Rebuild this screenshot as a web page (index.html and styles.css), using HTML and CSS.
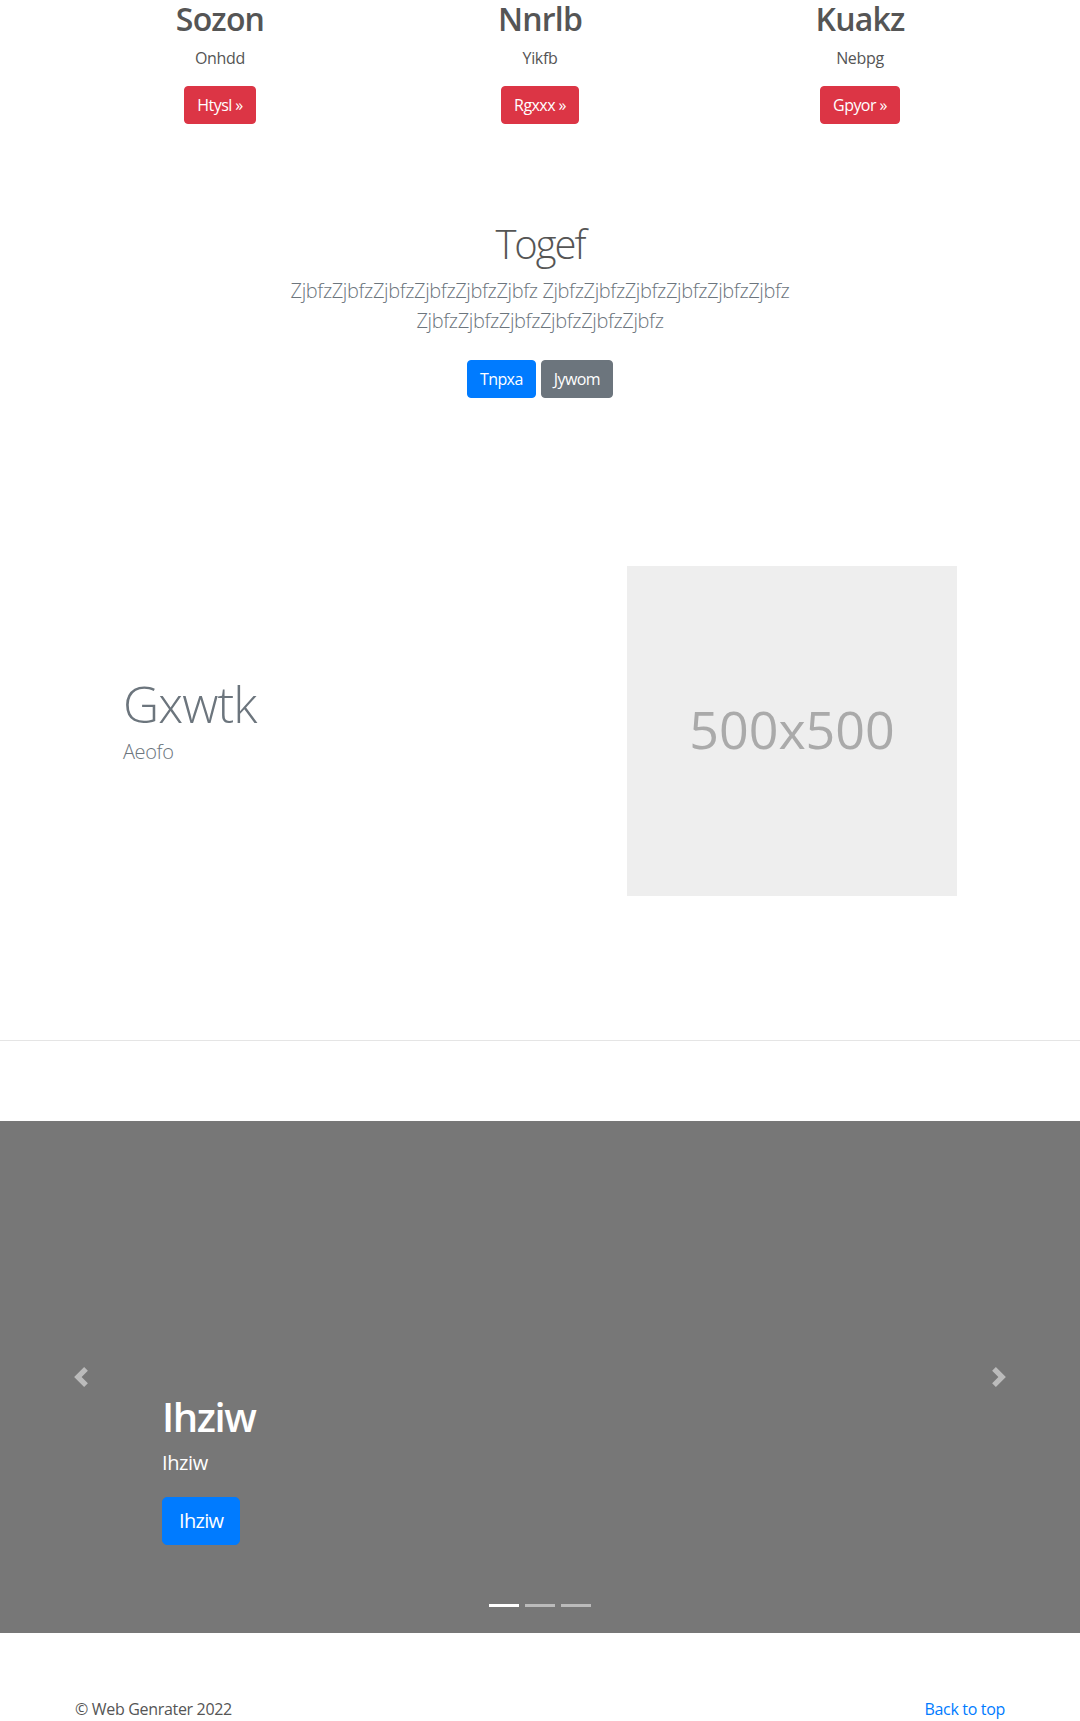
FILE: index.html
```html
<!DOCTYPE html>
<html lang="en">
<head>
<meta charset="utf-8">
<title>Web Genrater</title>
<link rel="stylesheet" href="styles.css">
</head>
<body>
<main>
  <section class="marketing">
    <div class="marketing-col">
      <h2 class="marketing-title">Sozon</h2>
      <p class="marketing-text">Onhdd</p>
      <p class="marketing-action"><a class="btn btn-danger" href="#">Htysl &raquo;</a></p>
    </div>
    <div class="marketing-col">
      <h2 class="marketing-title">Nnrlb</h2>
      <p class="marketing-text">Yikfb</p>
      <p class="marketing-action"><a class="btn btn-danger" href="#">Rgxxx &raquo;</a></p>
    </div>
    <div class="marketing-col">
      <h2 class="marketing-title">Kuakz</h2>
      <p class="marketing-text">Nebpg</p>
      <p class="marketing-action"><a class="btn btn-danger" href="#">Gpyor &raquo;</a></p>
    </div>
  </section>

  <section class="hero">
    <div class="hero-inner">
      <h1 class="hero-title">Togef</h1>
      <p class="hero-lead">ZjbfzZjbfzZjbfzZjbfzZjbfzZjbfz ZjbfzZjbfzZjbfzZjbfzZjbfzZjbfz ZjbfzZjbfzZjbfzZjbfzZjbfzZjbfz</p>
      <div class="hero-actions">
        <a class="btn btn-primary" href="#">Tnpxa</a>
        <a class="btn btn-secondary" href="#">Jywom</a>
      </div>
    </div>
  </section>

  <section class="featurette">
    <div class="featurette-text">
      <h2 class="featurette-heading">Gxwtk</h2>
      <p class="featurette-lead">Aeofo</p>
    </div>
    <div class="featurette-media">
      <div class="placeholder">500x500</div>
    </div>
  </section>

  <hr class="divider">

  <section class="carousel">
    <a class="carousel-control control-prev" href="#" aria-label="Previous">
      <svg class="control-icon" viewBox="0 0 8 8" width="20" height="20"><path d="M5.25 0l-4 4 4 4 1.5-1.5L4.25 4l2.5-2.5L5.25 0z"/></svg>
    </a>
    <div class="carousel-caption">
      <h1 class="caption-title">Ihziw</h1>
      <p class="caption-text">Ihziw</p>
      <div class="caption-action"><a class="btn btn-primary btn-lg" href="#">Ihziw</a></div>
    </div>
    <a class="carousel-control control-next" href="#" aria-label="Next">
      <svg class="control-icon" viewBox="0 0 8 8" width="20" height="20"><path d="M2.75 0l-1.5 1.5L3.75 4l-2.5 2.5L2.75 8l4-4-4-4z"/></svg>
    </a>
    <ol class="carousel-indicators">
      <li class="indicator active"></li>
      <li class="indicator"></li>
      <li class="indicator"></li>
    </ol>
  </section>

  <footer class="footer">
    <p class="footer-copy">&copy; Web Genrater 2022</p>
    <p class="footer-top"><a href="#">Back to top</a></p>
  </footer>
</main>
</body>
</html>
```

FILE: styles.css
```css
* { box-sizing: border-box; }

html, body {
  margin: 0;
  padding: 0;
  background: #fff;
}

body {
  font-family: "Open Sans", "Noto Sans", "DejaVu Sans", sans-serif;
  font-size: 16px;
  line-height: 1.5;
  color: #555;
}

a { text-decoration: none; }

.btn {
  display: inline-block;
  font-size: 16px;
  line-height: 24px;
  padding: 6px 12px;
  border: 1px solid transparent;
  border-radius: 4px;
  color: #fff;
  text-align: center;
  white-space: nowrap;
  letter-spacing: -0.035em;
}
.btn-danger { background: #dc3545; border-color: #dc3545; }
.btn-primary { background: #007bff; border-color: #007bff; }
.btn-secondary { background: #6c757d; border-color: #6c757d; }
.btn-lg {
  font-size: 20px;
  line-height: 30px;
  padding: 8px 16px;
  border-radius: 5px;
}

/* Marketing columns */
.marketing {
  width: 960px;
  margin: 0 auto;
  display: grid;
  grid-template-columns: repeat(3, 1fr);
}
.marketing-col {
  padding: 0 15px;
  text-align: center;
}
.marketing-title {
  margin: 0 0 8px;
  font-size: 32px;
  line-height: 38.4px;
  font-weight: 600;
  letter-spacing: -0.025em;
  color: #555;
}
.marketing-text {
  margin: 0 12px 16px;
  letter-spacing: -0.02em;
  color: #555;
}
.marketing-action {
  margin: 0 12px 16px;
  height: 38px;
}

/* Hero */
.hero {
  padding-top: 80px;
  text-align: center;
}
.hero-inner {
  max-width: 640px;
  margin: 0 auto;
  padding: 0 15px;
}
.hero-title {
  margin: 0 0 8px;
  font-size: 40px;
  line-height: 48px;
  font-weight: 300;
  letter-spacing: -0.05em;
  color: #555;
}
.hero-lead {
  margin: 0 0 16px;
  font-size: 20px;
  line-height: 30px;
  font-weight: 300;
  letter-spacing: -0.02em;
  color: #6c757d;
}
.hero-actions {
  display: flex;
  justify-content: center;
  gap: 5px;
  padding: 8px 0;
}

/* Featurette */
.featurette {
  width: 960px;
  margin: 0 auto;
  padding: 160px 63px 144px;
  display: grid;
  grid-template-columns: 1fr 1fr;
  column-gap: 30px;
  align-items: center;
}
.featurette-heading {
  margin: 0 0 8px;
  font-size: 50px;
  line-height: 1;
  font-weight: 300;
  letter-spacing: -0.9px;
  color: #6c757d;
}
.featurette-lead {
  margin: 0 0 16px;
  font-size: 20px;
  line-height: 30px;
  font-weight: 300;
  letter-spacing: -0.02em;
  color: #6c757d;
}
.featurette-media {
  display: flex;
  justify-content: flex-end;
}
.placeholder {
  width: 330px;
  height: 330px;
  background: #eee;
  color: #aaa;
  font-size: 52px;
  display: flex;
  align-items: center;
  justify-content: center;
  padding-bottom: 4px;
}

.divider {
  margin: 0;
  border: 0;
  border-top: 1px solid #e5e5e5;
}

/* Carousel */
.carousel {
  position: relative;
  margin-top: 80px;
  height: 512px;
  background: #777;
  display: flex;
  flex-direction: column;
  justify-content: flex-end;
  padding: 0 162px 68px;
}
.carousel-caption {
  color: #fff;
}
.caption-title {
  margin: 0 0 8px;
  font-size: 40px;
  line-height: 48px;
  font-weight: 600;
  letter-spacing: -0.035em;
}
.caption-text {
  margin: 0 0 20px;
  font-size: 20px;
  line-height: 28px;
  letter-spacing: -0.02em;
}
.caption-action {
  margin: 0 0 20px;
  height: 48px;
}
.carousel-control {
  position: absolute;
  top: 0;
  bottom: 0;
  width: 162px;
  display: flex;
  align-items: center;
  justify-content: center;
  opacity: 0.5;
}
.control-prev { left: 0; }
.control-next { right: 0; }
.control-icon { fill: #fff; display: block; }

.carousel-indicators {
  position: absolute;
  left: 0;
  right: 0;
  bottom: 16px;
  margin: 0;
  padding: 0;
  list-style: none;
  display: flex;
  justify-content: center;
}
.indicator {
  width: 30px;
  height: 23px;
  margin: 0 3px;
  border-top: 10px solid transparent;
  border-bottom: 10px solid transparent;
  background: #fff;
  background-clip: padding-box;
  opacity: 0.5;
}
.indicator.active { opacity: 1; }

/* Footer */
.footer {
  width: 960px;
  margin: 64px auto 0;
  padding: 0 15px;
  display: flex;
  justify-content: space-between;
  letter-spacing: -0.02em;
}
.footer p { margin: 0 0 16px; }
.footer-top a { color: #007bff; }
```
